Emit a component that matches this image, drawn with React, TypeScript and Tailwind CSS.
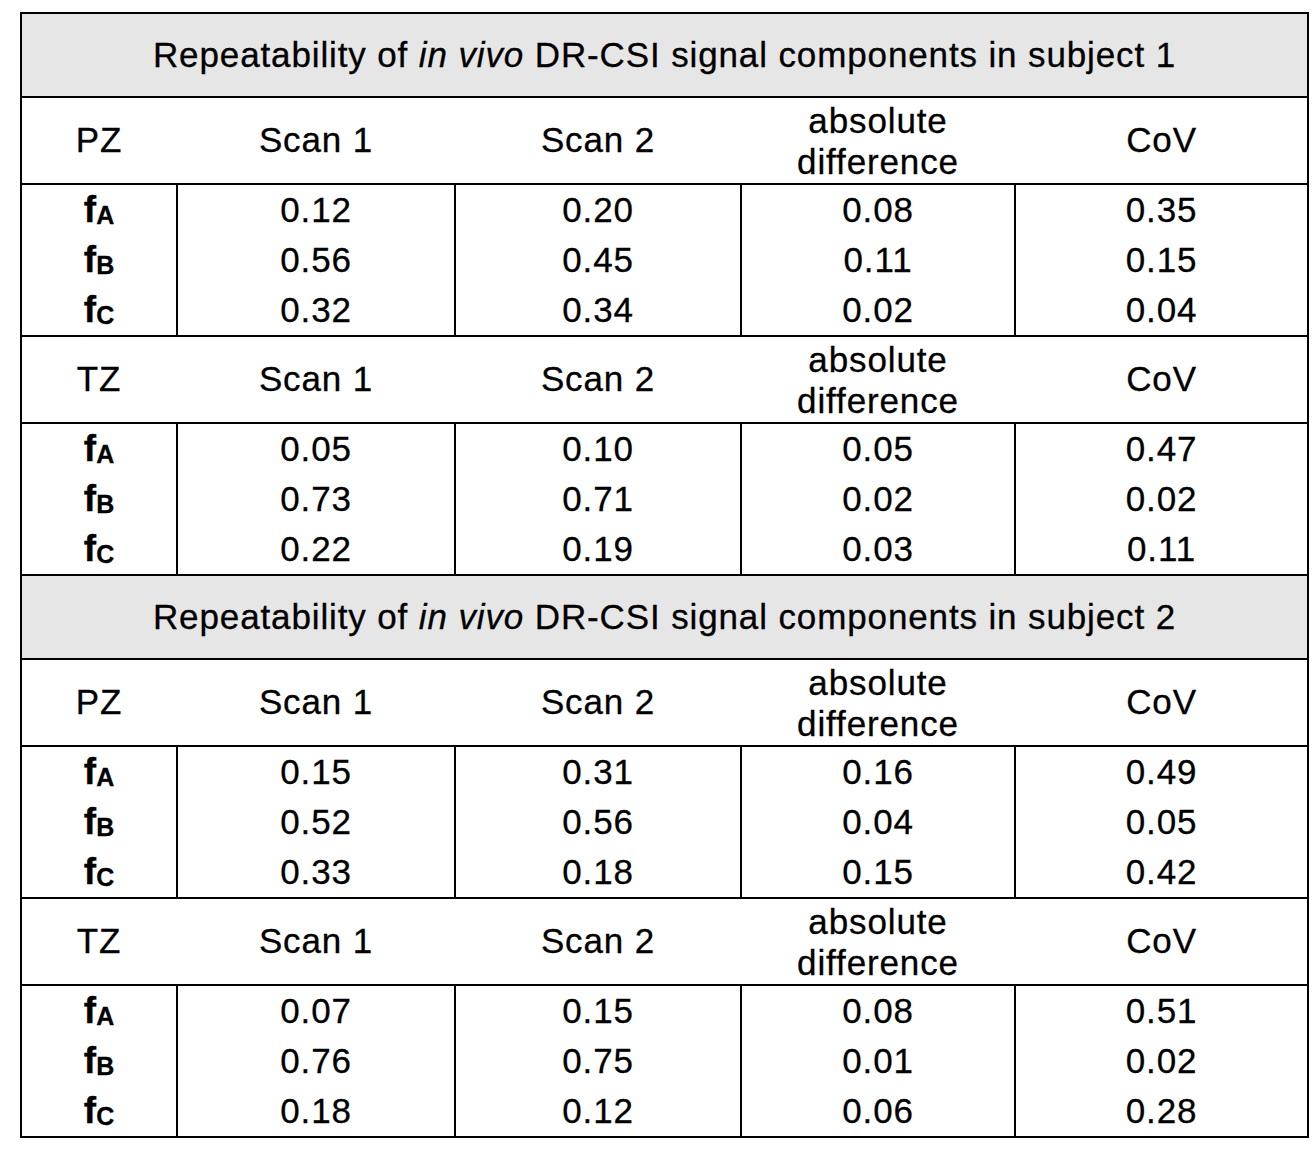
import React from "react";

type Row = { label: "A" | "B" | "C"; values: string[] };
type Block = { zone: string; rows: Row[] };
type Section = { subject: number; blocks: Block[] };

const sections: Section[] = [
  {
    subject: 1,
    blocks: [
      {
        zone: "PZ",
        rows: [
          { label: "A", values: ["0.12", "0.20", "0.08", "0.35"] },
          { label: "B", values: ["0.56", "0.45", "0.11", "0.15"] },
          { label: "C", values: ["0.32", "0.34", "0.02", "0.04"] },
        ],
      },
      {
        zone: "TZ",
        rows: [
          { label: "A", values: ["0.05", "0.10", "0.05", "0.47"] },
          { label: "B", values: ["0.73", "0.71", "0.02", "0.02"] },
          { label: "C", values: ["0.22", "0.19", "0.03", "0.11"] },
        ],
      },
    ],
  },
  {
    subject: 2,
    blocks: [
      {
        zone: "PZ",
        rows: [
          { label: "A", values: ["0.15", "0.31", "0.16", "0.49"] },
          { label: "B", values: ["0.52", "0.56", "0.04", "0.05"] },
          { label: "C", values: ["0.33", "0.18", "0.15", "0.42"] },
        ],
      },
      {
        zone: "TZ",
        rows: [
          { label: "A", values: ["0.07", "0.15", "0.08", "0.51"] },
          { label: "B", values: ["0.76", "0.75", "0.01", "0.02"] },
          { label: "C", values: ["0.18", "0.12", "0.06", "0.28"] },
        ],
      },
    ],
  },
];

// widths include the 2px left divider for columns 2..5
const colW = ["w-[154px]", "w-[278px]", "w-[286px]", "w-[274px]", "w-[293px]"];

function Header({ zone }: { zone: string }) {
  return (
    <div className="flex h-[87px] border-b-2 border-black">
      <div className={`${colW[0]} flex items-center justify-center`}>{zone}</div>
      <div className={`${colW[1]} flex items-center justify-center pl-[2px]`}>Scan 1</div>
      <div className={`${colW[2]} flex items-center justify-center pl-[2px]`}>Scan 2</div>
      <div className={`${colW[3]} flex flex-col items-center justify-center pl-[2px] leading-[41px]`}>
        <span>absolute</span>
        <span>difference</span>
      </div>
      <div className={`${colW[4]} flex items-center justify-center pl-[2px]`}>CoV</div>
    </div>
  );
}

function DataBlock({ rows, last }: { rows: Row[]; last: boolean }) {
  return (
    <div className={`flex ${last ? "" : "border-b-2 border-black"}`}>
      <div className={`${colW[0]} flex flex-col`}>
        {rows.map((r) => (
          <div key={r.label} className="h-[50px] flex items-center justify-center leading-[50px]">
            <span className="font-bold text-[37px] tracking-normal">f</span>
            <span className="font-bold text-[25px] tracking-normal relative top-[5px]">{r.label}</span>
          </div>
        ))}
      </div>
      {[0, 1, 2, 3].map((c) => (
        <div key={c} className={`${colW[c + 1]} flex flex-col border-l-2 border-black`}>
          {rows.map((r) => (
            <div key={r.label} className="h-[50px] flex items-center justify-center leading-[50px]">
              {r.values[c]}
            </div>
          ))}
        </div>
      ))}
    </div>
  );
}

export default function App() {
  return (
    <div className="min-h-screen bg-white pt-[12px] pl-[20px] text-black font-['Liberation_Sans',Arial,sans-serif] text-[35px] tracking-[0.025em] [-webkit-text-stroke:0.3px_black]">
      <div className="w-[1289px] border-2 border-black">
        {sections.map((s, si) => (
          <div key={s.subject}>
            <div className="h-[84px] bg-[#e6e6e6] border-b-2 border-black flex items-center justify-center">
              <span>
                Repeatability of <i>in vivo</i> DR-CSI signal components in subject {s.subject}
              </span>
            </div>
            {s.blocks.map((b, bi) => (
              <div key={b.zone}>
                <Header zone={b.zone} />
                <DataBlock rows={b.rows} last={si === sections.length - 1 && bi === s.blocks.length - 1} />
              </div>
            ))}
          </div>
        ))}
      </div>
    </div>
  );
}
